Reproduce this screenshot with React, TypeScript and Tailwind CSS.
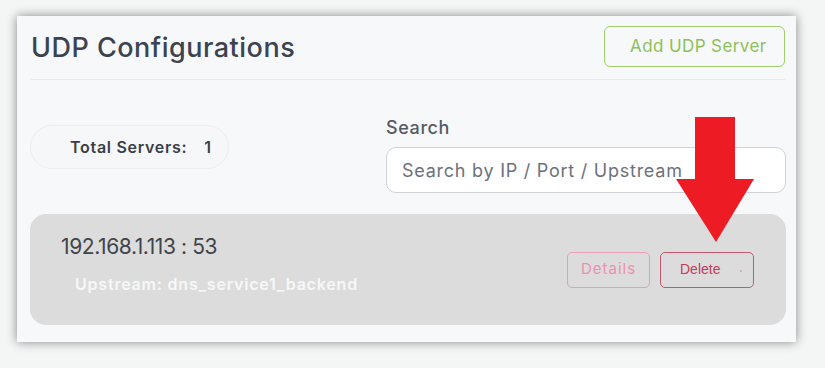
import React from 'react';

const servers = [{ ip: '192.168.1.113', port: 53, upstream: 'dns_service1_backend' }];

export default function App() {
  return (
    <div className="w-[825px] h-[368px] bg-[#f4f6f5] pt-[16px] pl-[17px] font-['Inter',sans-serif] relative">
      <div className="w-[779px] h-[326px] bg-[#f7f8fa] shadow-[0_0_10px_rgba(0,0,0,0.45)] pl-[13px] pr-[10px] pt-[10px]">
        {/* header */}
        <div className="flex items-center justify-between h-[41px] pl-[1px]">
          <h1 className="text-[27px] font-medium text-[#3b4350] tracking-[0.5px] mt-[3px]">UDP Configurations</h1>
          <button className="h-[41px] w-[181px] mr-[1px] border border-[#9fcf6e] rounded-[6px] pl-[25px] pr-[14px] text-[17px] tracking-[0.4px] text-[#8cc05a] text-left">
            Add UDP Server
          </button>
        </div>
        <div className="mt-[12px] ml-[1px] mr-[1px] h-px bg-[#e7e9ec]" />

        {/* stats + search */}
        <div className="flex items-start mt-[36px]">
          <div className="mt-[9px] h-[44px] w-[199px] rounded-full border border-[#eceef1] bg-[#f6f7f9] flex items-center pl-[39px] text-[16px] tracking-[0.7px] font-semibold text-[#3a3f47]">
            <span>Total Servers:</span>
            <span className="ml-[17px]">{servers.length}</span>
          </div>
          <div className="ml-[157px] flex-1">
            <div className="h-[24px] text-[18px] tracking-[0.6px] font-medium text-[#555a62] leading-[24px]">Search</div>
            <input
              className="mt-[7px] w-[400px] h-[46px] rounded-[10px] border border-[#cfd2d6] bg-white px-[15px] text-[18px] tracking-[0.75px] text-[#5f6670] placeholder:text-[#6b727c] outline-none"
              placeholder="Search by IP / Port / Upstream"
            />
          </div>
        </div>

        {/* server list */}
        {servers.map((s) => (
          <div key={s.ip} className="mt-[21px] w-[756px] h-[111px] rounded-[16px] bg-[#dcdcdc] flex items-center pl-[31px] pr-[32px]">
            <div className="flex-1 -mt-[12px]">
              <div className="text-[21px] text-[#3f444b] tracking-[-0.4px]">{s.ip} : {s.port}</div>
              <div className="mt-[10px] ml-[14px] text-[16px] tracking-[0.8px] font-semibold text-[#f7f7f7]">Upstream: {s.upstream}</div>
            </div>
            <button className="h-[36px] w-[83px] rounded-[5px] border border-[#ea9cb9] text-[15px] tracking-[1px] text-[#ee8fb1]">Details</button>
            <button className="ml-[10px] h-[36px] w-[94px] rounded-[5px] border border-[#c9566f] pl-[19px] text-left font-['Liberation_Sans',sans-serif] text-[14px] text-[#c43a59] relative">
              Delete
              <span className="absolute right-[11px] top-[17px] w-[2px] h-[2px] rounded-full bg-[#d9a0b0]" />
            </button>
          </div>
        ))}
      </div>

      {/* red annotation arrow */}
      <svg className="absolute left-[676px] top-[117px]" width="79" height="126" viewBox="0 0 79 126">
        <polygon points="19,0 59,0 59,62 78,62 40,125 0,62 19,62" fill="#ed1c24" />
      </svg>
    </div>
  );
}
